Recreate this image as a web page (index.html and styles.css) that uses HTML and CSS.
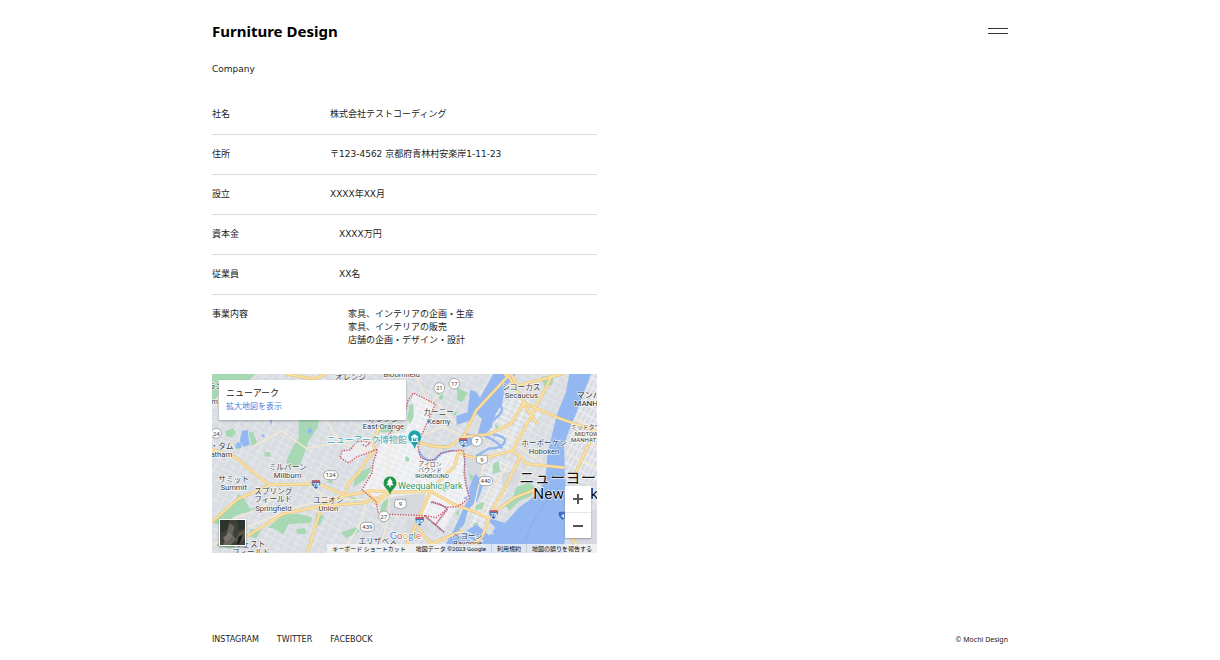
FILE: index.html
```html
<!DOCTYPE html>
<html lang="ja">
<head>
<meta charset="utf-8">
<meta name="viewport" content="width=device-width, initial-scale=1">
<title>Furniture Design | Company</title>
<link rel="stylesheet" href="styles.css">
</head>
<body>
<div class="page">
  <header class="header">
    <h1 class="logo">Furniture Design</h1>
    <button class="menu" type="button" aria-label="メニュー"><span class="menu-bar"></span><span class="menu-bar"></span></button>
  </header>

  <main class="main">
    <h2 class="heading">Company</h2>
    <dl class="company">
      <div class="row"><dt>社名</dt><dd>株式会社テストコーディング</dd></div>
      <div class="row"><dt>住所</dt><dd>〒123-4562 京都府青林村安楽岸1-11-23</dd></div>
      <div class="row"><dt>設立</dt><dd>XXXX年XX月</dd></div>
      <div class="row"><dt>資本金</dt><dd>XXXX万円</dd></div>
      <div class="row"><dt>従業員</dt><dd>XX名</dd></div>
      <div class="row"><dt>事業内容</dt><dd>家具、インテリアの企画・生産<br>家具、インテリアの販売<br>店舗の企画・デザイン・設計</dd></div>
    </dl>

    <section class="map" aria-label="地図">
      <svg class="map-canvas" viewBox="8 5 1155 537" preserveAspectRatio="xMidYMid slice">
        <defs>
          <pattern id="streets" width="46" height="38" patternUnits="userSpaceOnUse" patternTransform="rotate(28)">
            <path class="street" d="M0 8H46M0 27H28M12 0V38M34 8V38"/>
          </pattern>
          <pattern id="grid" width="21" height="16" patternUnits="userSpaceOnUse" patternTransform="rotate(24)">
            <path class="street-fine" d="M0 4H21M6 0V16"/>
          </pattern>
          <pattern id="manhattan" width="14" height="26" patternUnits="userSpaceOnUse" patternTransform="rotate(29)">
            <path class="street-fine" d="M0 4H14M6 0V26"/>
          </pattern>
          <path id="shield" d="M-12-14Q-6-9 0-13Q6-9 12-14Q18 4 0 15Q-18 4-12-14Z"/>
        </defs>
        <rect class="land" x="8" y="5" width="1155" height="537"/>
        <rect fill="url(#streets)" x="8" y="5" width="1155" height="537"/>

        <g class="newark">
          <path d="M612 62L678 95L636 190L626 232L646 262L690 256L714 234L762 234L767 310L780 378L744 405L700 478L648 432L560 432L508 425L500 388L456 352L488 302L505 228L545 185L590 178Z"/>
          <path d="M505 228L418 272L392 256L398 236L424 232L468 190L480 213Z"/>
        </g>
        <path fill="url(#grid)" d="M612 62L678 95L636 190L626 232L646 262L690 256L714 234L762 234L767 310L780 378L744 405L700 478L648 432L560 432L508 425L456 352L505 228L545 185L590 178Z"/>
        <path fill="url(#grid)" d="M815 170L920 50L1000 120L915 235L850 250L860 190ZM820 260L900 265L930 300L820 470L770 500L800 380L815 330Z"/>
        <path fill="url(#manhattan)" d="M1120 60H1163V330H1075L1070 240Z"/>
        <path class="block" d="M556 372L650 362L635 430L515 426L508 398ZM592 442L642 440L660 470L620 500L585 495ZM770 265L812 250L818 320L782 345ZM1085 420L1163 410V515H1080ZM875 305L925 290L935 325L880 345Z"/>

        <g class="park">
          <path d="M8 5H140L118 24H8ZM8 5L24 5L27 70L8 90Z"/>
          <path d="M268 143H328L325 165L298 205L284 245L272 278L232 284L232 262L252 220L268 198Z"/>
          <path d="M48 176L70 168L80 180L68 196L50 190ZM118 178L130 178L144 212L126 220ZM165 240L182 240L184 253L166 252ZM75 217L88 215L92 231L78 228Z"/>
          <path d="M88 365L106 382L122 410L148 404L140 414L80 428L48 452L18 455L8 447L32 422L68 397Z"/>
          <path d="M222 427L262 424L308 435L305 451L238 456L222 486L192 468L175 466ZM320 400L342 390L352 405L332 415ZM125 470L156 474L140 499L118 490ZM258 472L286 466L292 485L265 486ZM40 495L78 514L75 530L20 520Z"/>
          <path d="M320 425L345 430L330 460L318 455ZM442 298L468 292L492 278L470 320L430 345ZM420 370L444 378L435 388ZM395 480L440 465L452 478L410 497ZM350 328L368 320L370 336Z"/>
          <path d="M600 100L612 93L613 135L602 155L594 140ZM683 62L698 60L704 78L692 84ZM742 45L775 62L758 90L742 82L744 64ZM505 160L550 152L552 178L510 180ZM600 180L616 170L620 212L606 212ZM690 222L714 216L705 234Z"/>
          <path d="M520 390L544 368L528 415L510 424ZM682 338L706 334L720 346L706 358ZM590 250L600 258L598 270L588 265ZM778 302L800 318L785 325ZM720 120L745 120L738 130Z"/>
          <path d="M850 275L868 265L872 300L850 304ZM920 345L958 332L978 345L965 372L930 386L900 415L885 395L910 375ZM800 398L824 388L820 410L798 413ZM790 455L806 448L800 485ZM736 420L750 415L748 432ZM1075 315L1095 310L1092 328ZM1142 180L1160 178L1158 235L1144 222ZM995 15L1035 5L1028 38L1005 42ZM1010 290L1028 285L1022 303ZM855 155L868 160L862 172Z"/>
        </g>

        <g class="water">
          <path d="M782 54Q800 52 812 76L852 5H920L885 50L878 98Q852 126 848 164L820 194L805 183L818 140L800 122L780 145L742 158L741 130L775 120Z"/>
          <path d="M765 180L785 186L788 218L760 226L750 200Z"/>
          <path d="M1080 5H1163L1145 55L1088 150L1064 216L1067 310L1075 410L1063 542H695L735 470L752 432L768 396L781 378L780 345L798 304L816 323L820 346L805 385L777 410L765 455L735 493L765 478L802 456L840 490L858 467L835 443L848 440L887 452L930 405L967 378L995 350L1010 303L1015 240L1030 180L1045 120L1070 60Z"/>
          <path d="M98 175L115 173L121 218L102 223L91 205ZM82 210L95 212L96 227L80 226ZM155 188L166 186L164 196ZM180 143L188 143L188 160ZM300 165L310 174L302 187L294 180ZM940 158L950 165L944 172ZM1002 210L1015 205L1015 217ZM762 378L775 370L772 382Z"/>
        </g>
        <path class="manhattan-land" d="M1163 5L1145 5L1096 135L1075 200L1069 260L1075 330L1163 330Z"/>
        <path fill="url(#manhattan)" d="M1163 5L1145 5L1096 135L1075 200L1069 260L1075 330L1163 330Z"/>
        <path class="creek" d="M852 28Q816 65 860 88T842 150Q792 175 830 192T878 228M628 235Q640 268 674 264Q692 237 732 235M850 187Q897 193 884 212T840 228L800 252"/>
        <path class="creek-thin" d="M732 235Q760 232 765 260L767 310L780 375"/>
        <path class="pier" d="M740 481L790 505M752 467L822 507M812 458L852 486"/>
        <path class="ferry" d="M1064 330Q970 420 947 510"/>

        <g class="minor">
          <path d="M300 5L345 50M8 520L118 462L260 405L390 370M30 460L170 398L205 355M250 290L350 380L470 382M135 220L218 175L290 228L420 205M350 140L390 210L490 240M570 155L535 250L540 430M620 15L660 95L745 20M645 188L700 162L760 190M686 95L740 155M535 440L510 542M485 340L448 465L395 542M630 435L720 270M830 245L790 420M895 270L812 430M1010 45L895 255M870 145L920 220L1000 270M1100 140L1163 180M1090 185L1163 222M1075 245L1163 285"/>
        </g>
        <g class="road-edge">
          <path d="M8 232L78 255L178 337L330 335L408 370L488 355L560 360L665 357L735 397L802 420L840 440"/>
          <path d="M408 365L416 333L450 300L470 265L496 232L488 202L514 165M408 370L340 393L318 462L295 542M8 449L85 380L180 340M112 493L220 425L340 400L460 392L550 360"/>
          <path d="M620 205Q660 226 718 224L760 194L838 186L905 154L944 90L900 15L885 5M760 200L800 115L890 18L900 5M944 92L1045 136L1163 178M940 93L985 155M750 233L735 283L665 350L628 440L580 542"/>
          <path d="M750 233Q760 258 830 256L908 235Q940 255 950 274L1065 286M908 238L1000 65L1030 5M935 248L890 340L850 410L820 490L768 542M1090 320L1150 190M845 425L918 375L982 350M1070 400L1084 480L1110 542"/>
          <path d="M905 5L925 40L1060 5M625 465L665 515L760 475M230 5L310 20L350 5M470 355L502 395L550 350"/>
        </g>
        <g class="road">
          <path d="M8 232L78 255L178 337L330 335L408 370L488 355L560 360L665 357L735 397L802 420L840 440"/>
          <path d="M408 365L416 333L450 300L470 265L496 232L488 202L514 165M408 370L340 393L318 462L295 542M8 449L85 380L180 340M112 493L220 425L340 400L460 392L550 360"/>
          <path d="M620 205Q660 226 718 224L760 194L838 186L905 154L944 90L900 15L885 5M760 200L800 115L890 18L900 5M944 92L1045 136L1163 178M940 93L985 155M750 233L735 283L665 350L628 440L580 542"/>
          <path d="M750 233Q760 258 830 256L908 235Q940 255 950 274L1065 286M908 238L1000 65L1030 5M935 248L890 340L850 410L820 490L768 542M1090 320L1150 190M845 425L918 375L982 350M1070 400L1084 480L1110 542"/>
          <path d="M905 5L925 40L1060 5M625 465L665 515L760 475M230 5L310 20L350 5M470 355L502 395L550 350"/>
        </g>
        <path class="border" d="M590 110L596 84L612 62L678 95L658 140L636 190L626 225L634 255L656 265L680 260L694 242L732 235L762 234L767 260L764 306L770 340L780 378L744 403L712 405L665 386M648 430L680 436L714 410M648 430L704 480M648 430L508 425L500 388L458 352L488 302L492 270L505 230L440 255L418 272L392 256L398 236L424 232L440 208L468 206L480 213L472 222L456 216M508 205L540 186L550 170"/>
        <path class="pier-border" d="M665 390Q696 394 714 410L680 455M646 431L704 479"/>

        <g class="badge">
          <circle cx="21" cy="183" r="15"/><circle cx="690" cy="47" r="16"/><circle cx="735" cy="34" r="16"/><circle cx="802" cy="206" r="16"/>
          <rect x="343" y="295" width="43" height="27" rx="13"/><rect x="808" y="313" width="42" height="27" rx="13"/><rect x="453" y="450" width="42" height="27" rx="13"/><circle cx="524" cy="432" r="16"/>
          <path d="M560 380Q566 386 574 380Q582 386 588 380Q593 390 590 404L574 410L556 404Q553 390 560 380ZM804 248Q811 253 818 248Q825 253 832 248Q837 258 834 270L818 276L802 270Q799 258 804 248Z"/>
        </g>
        <g class="badge-text">
          <text x="21" y="190">24</text><text x="690" y="54">21</text><text x="735" y="41">17</text><text x="802" y="213">7</text><text x="364" y="315">124</text><text x="829" y="333">440</text><text x="474" y="470">439</text><text x="523" y="439">27</text><text x="573" y="402">9</text><text x="818" y="269">9</text>
        </g>
        <g class="shields">
          <use href="#shield" x="320" y="336"/><use href="#shield" x="762" y="210"/><use href="#shield" x="631" y="446"/><use href="#shield" x="853" y="426"/><use href="#shield" x="1060" y="429"/>
          <path class="shield-top" d="M309 324H331V330H307ZM751 198H773V204H749ZM620 434H642V440H618ZM842 414H864V420H840Z"/>
          <g class="shield-text"><text x="320" y="344">78</text><text x="762" y="218">95</text><text x="631" y="454">95</text><text x="853" y="434">78</text><text x="1060" y="437">4</text></g>
        </g>

        <g class="label">
          <text x="415" y="6">ウェスト</text><text x="424" y="24">オレンジ</text><text x="577" y="14">Bloomfield</text>
          <text x="18" y="50">ラン</text><text x="16" y="94">m</text>
          <text x="936" y="53">シコーカス</text><text x="936" y="77">Secaucus</text>
          <text x="688" y="129">カーニー</text><text x="688" y="154">Kearny</text>
          <text x="522" y="148">オレンジ</text><text x="522" y="170">East Orange</text>
          <text x="38" y="231">・タム</text><text x="36" y="255">atham</text>
          <text x="235" y="294">ミルバーン</text><text x="235" y="318">Millburn</text>
          <text x="73" y="330">サミット</text><text x="73" y="354">Summit</text>
          <text x="192" y="366">スプリング</text><text x="192" y="390">フィールド</text><text x="192" y="415">Springfield</text>
          <text x="357" y="391">ユニオン</text><text x="357" y="415">Union</text>
          <text x="1004" y="220">ホーボーケン</text><text x="1004" y="244">Hoboken</text>
          <text x="505" y="515">エリザベス</text><text x="775" y="499">ベヨーン</text><text x="775" y="522">Bayonne</text>
          <text x="122" y="524">ウェスト</text><text x="125" y="547">フィールド</text>
        </g>
        <g class="label district">
          <text x="662" y="281">アイロン</text><text x="662" y="299">バウンド</text><text x="668" y="317">IRONBOUND</text>
          <text x="1138" y="171">ミッドタウン</text><text x="1138" y="190">MIDTOWN</text><text x="1140" y="208">MANHATTAN</text>
        </g>
        <g class="label borough"><text x="1102" y="76">マンハッタン</text><text x="1095" y="101">MANHATTAN</text></g>
        <g class="label city"><text x="930" y="333">ニューヨーク</text><text x="972" y="381">New York</text></g>
        <text class="poi museum" x="352" y="212">ニューアーク博物館</text>
        <text class="poi weequahic" x="566" y="349">Weequahic Park</text>
        <path class="pin-museum" d="M616 231Q612 216 602 208A20 20 0 1 1 630 208Q620 216 616 231Z"/>
        <path class="pin-mark" d="M605 193L616 185L627 193V196H605ZM607 198H611V206H607ZM621 198H625V206H621ZM613 198H619V201H613ZM604 206H628V209H604Z"/>
        <path class="pin-park" d="M542 369Q538 354 528 346A20 20 0 1 1 556 346Q546 354 542 369Z"/>
        <path class="pin-mark" d="M542 316L551 330H547L553 339H544V345H540V339H531L537 330H533Z"/>
        <text class="google" x="541" y="501"><tspan class="g-blue">G</tspan><tspan class="g-red">o</tspan><tspan class="g-yellow">o</tspan><tspan class="g-blue">g</tspan><tspan class="g-green">l</tspan><tspan class="g-red">e</tspan></text>
      </svg>

      <div class="place">
        <p class="place-name">ニューアーク</p>
        <a class="place-link" href="#">拡大地図を表示</a>
      </div>
      <button class="satellite" type="button" aria-label="航空写真を表示">
        <svg viewBox="0 0 24 24">
          <rect width="24" height="24" fill="#3d3f38"/>
          <path d="M0 0H9L7 9L0 12ZM16 0H24V8L18 10Z" fill="#2c352d"/>
          <path d="M9 3L14 6L12 14L16 19L10 24H3L6 15Z" fill="#66645b"/>
          <path d="M18 12L24 9V18L19 22L14 20Z" fill="#565348"/>
          <path d="M18 16L22 14L19 22L16 24Z" fill="#151c1d"/>
          <path d="M3 17L9 12L12 15L6 22Z" fill="#7b766d"/>
        </svg>
      </button>
      <div class="zoom">
        <button class="zoom-button" type="button" aria-label="拡大"><svg viewBox="0 0 12 12"><path d="M6 1V11M1 6H11"/></svg></button>
        <button class="zoom-button" type="button" aria-label="縮小"><svg viewBox="0 0 12 12"><path d="M1 6H11"/></svg></button>
      </div>
      <div class="credits">
        <button class="credit" type="button">キーボード ショートカット</button>
        <span class="credit">地図データ ©2023 Google</span>
        <a class="credit" href="#">利用規約</a>
        <a class="credit" href="#">地図の誤りを報告する</a>
      </div>
    </section>
  </main>

  <footer class="footer">
    <nav class="social">
      <a href="#">INSTAGRAM</a>
      <a href="#">TWITTER</a>
      <a href="#">FACEBOCK</a>
    </nav>
    <small class="copyright">© Mochi Design</small>
  </footer>
</div>
</body>
</html>
```

FILE: styles.css
```css
* {
  box-sizing: border-box;
}

body {
  margin: 0;
  background: #fff;
  color: #222;
  font: 9px/13px "DejaVu Sans", "Noto Sans CJK JP", sans-serif;
}

a {
  color: inherit;
  text-decoration: none;
}

button {
  margin: 0;
  padding: 0;
  border: 0;
  background: none;
  color: inherit;
  font: inherit;
  cursor: pointer;
}

.page {
  display: flex;
  flex-direction: column;
  max-width: 836px;
  min-height: 100vh;
  margin: 0 auto;
  padding: 20px 20px 13px;
}

.header {
  display: flex;
  align-items: center;
  justify-content: space-between;
}

.logo {
  margin: 0;
  color: #000;
  font-size: 15px;
  line-height: 22px;
  font-family: "Noto Sans", sans-serif;
}

.menu {
  display: grid;
  gap: 4px;
  width: 20px;
}

.menu-bar {
  height: 1px;
  background: #333;
}

.main {
  flex: 1;
  width: 385px;
  max-width: 100%;
  padding-top: 21px;
}

.heading {
  margin: 0 0 19px;
  font-size: 9px;
  font-weight: 400;
}

.company {
  margin: 0;
}

.row {
  display: flex;
  gap: 100px;
  padding: 13px 0;
  border-bottom: 1px solid #ddd;
}

.row:last-child {
  border-bottom: 0;
}

.row dd {
  margin: 0;
}

.map {
  position: relative;
  margin-top: 14px;
  overflow: hidden;
  font-family: Roboto, "Noto Sans CJK JP", sans-serif;
}

.map-canvas {
  display: block;
  width: 100%;
}

.land { fill: #d9dde2; }
.manhattan-land { fill: #d9dde2; }
.street { fill: none; stroke: #eceff2; stroke-width: 2; }
.street-fine { fill: none; stroke: #fafbfc; stroke-width: 2; }
.newark { fill: #ebecef; }
.block { fill: #d6d9de; }
.park { fill: #a6d8b4; }
.water { fill: #93b7f1; }
.creek { fill: none; stroke: #93b7f1; stroke-width: 7; }
.creek-thin { fill: none; stroke: #93b7f1; stroke-width: 3; }
.pier { fill: none; stroke: #dfe2e6; stroke-width: 5; }
.ferry { fill: none; stroke: #7fa4df; stroke-width: 2; }
.minor { fill: none; stroke: #f5ead0; stroke-width: 4; }
.road-edge { fill: none; stroke: #ebc67e; stroke-width: 9; stroke-linejoin: round; }
.road { fill: none; stroke: #fae3a5; stroke-width: 5; stroke-linejoin: round; }
.border { fill: none; stroke: #d05058; stroke-width: 4; stroke-dasharray: 4 4; }
.pier-border { fill: none; stroke: #b0608d; stroke-width: 5; stroke-dasharray: 4 2; }

.badge { fill: #fff; stroke: #80868b; stroke-width: 2; }
.badge-text { fill: #3c4043; font-size: 18px; text-anchor: middle; }
.shields { fill: #3d70bd; stroke: #fff; stroke-width: 1; }
.shield-top { fill: #c45a62; stroke: none; }
.shield-text { fill: #fff; stroke: none; font-size: 18px; font-weight: 700; text-anchor: middle; }

.label {
  fill: #3c4043;
  stroke: #fff;
  stroke-width: 4px;
  stroke-opacity: 0.8;
  paint-order: stroke;
  font-size: 23px;
  text-anchor: middle;
}

.district { font-size: 18px; }
.borough { fill: #202124; font-size: 24px; text-anchor: start; }
.city { fill: #111; font-size: 46px; text-anchor: start; }

.poi {
  stroke: #fff;
  stroke-width: 4px;
  paint-order: stroke;
  font-size: 27px;
}

.museum { fill: #3aa3ae; }
.weequahic { fill: #34935a; }
.pin-museum { fill: #1fa2b0; stroke: #fff; }
.pin-park { fill: #1e9448; stroke: #fff; }
.pin-mark { fill: #fff; }

.google {
  stroke: #fff;
  stroke-width: 4px;
  paint-order: stroke;
  font-family: Lato, sans-serif;
  font-size: 30px;
}

.g-blue { fill: #4b86e0; }
.g-red { fill: #e0594e; }
.g-yellow { fill: #edb93c; }
.g-green { fill: #43a25d; }

.place {
  position: absolute;
  top: 6px;
  left: 7px;
  width: 187px;
  padding: 6px 7px;
  background: #fff;
  box-shadow: 0 1px 2px rgb(0 0 0 / 30%);
}

.place-name {
  margin: 0;
  font-size: 9px;
  line-height: 14px;
}

.place-link {
  display: block;
  color: #4a7fe0;
  font-size: 8px;
  line-height: 14px;
}

.satellite {
  position: absolute;
  bottom: 7px;
  left: 7px;
  width: 27px;
  height: 27px;
  border: 1px solid #fff;
  box-shadow: 0 1px 2px rgb(0 0 0 / 40%);
}

.satellite svg {
  display: block;
  width: 100%;
}

.zoom {
  position: absolute;
  right: 6px;
  bottom: 15px;
  display: grid;
  width: 26px;
  background: #fff;
  border-radius: 1px;
  box-shadow: 0 1px 2px rgb(0 0 0 / 30%);
}

.zoom-button {
  display: grid;
  place-items: center;
  height: 26px;
}

.zoom-button + .zoom-button {
  border-top: 1px solid #e6e6e6;
}

.zoom-button svg {
  width: 12px;
  fill: none;
  stroke: #555;
  stroke-width: 2;
}

.credits {
  position: absolute;
  right: 0;
  bottom: 0;
  display: flex;
  color: #111;
  font-size: 6px;
  line-height: 9px;
  white-space: nowrap;
}

.credit {
  padding: 0 5px;
  border-right: 1px solid #ccc;
  background: rgb(245 245 245 / 75%);
}

.credit:first-child,
.credit:last-child {
  border-right: 0;
}

.footer {
  display: flex;
  align-items: center;
  justify-content: space-between;
  font-size: 8px;
  line-height: 14px;
}

.social {
  display: flex;
  gap: 18px;
}

.copyright {
  font-family: "Noto Sans", sans-serif;
  font-size: 7px;
}
```
